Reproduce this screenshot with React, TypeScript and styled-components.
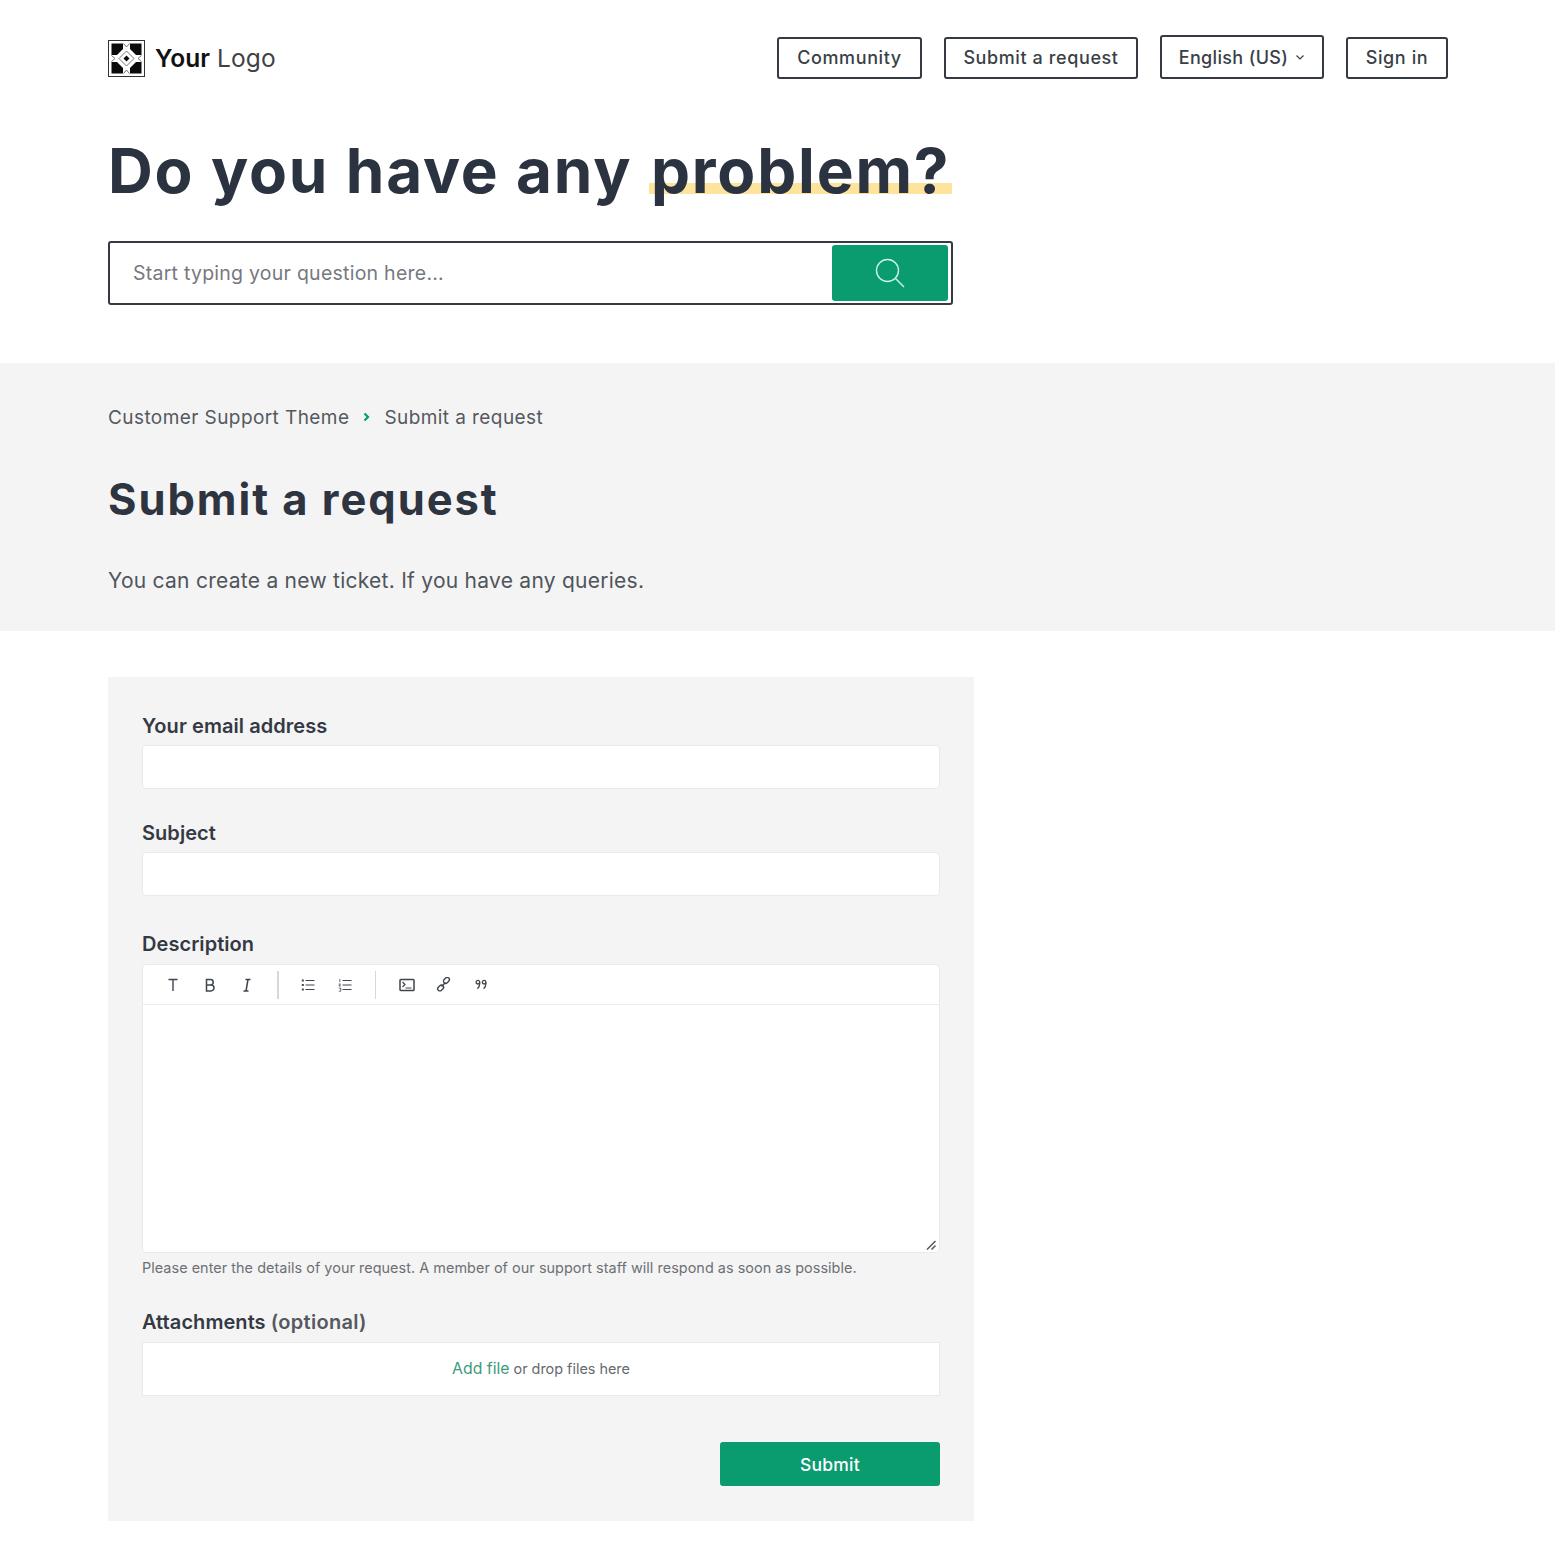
import React from "react";
import styled, { createGlobalStyle } from "styled-components";

const Global = createGlobalStyle`
  html, body { margin: 0; padding: 0; background: #fff; }
  body { font-family: Inter, "Open Sans", "Liberation Sans", sans-serif; color: #2c3340; }
  * { box-sizing: border-box; }
`;
const Page = styled.div`width: 1555px; height: 1553px; overflow: hidden; background: #fff;`;
const Wrap = styled.div`padding: 0 107px 0 108px;`;
const Header = styled.header`display: flex; justify-content: space-between; align-items: flex-end; height: 79px;`;
const Brand = styled.div`display: flex; align-items: center; gap: 10px; padding-bottom: 2px; font-size: 24.5px; letter-spacing: .1px; color: #3f4145;
  b { font-weight: 600; color: #111; }
  span { margin-top: -2px; }`;
const Nav = styled.nav`display: flex; align-items: flex-end; gap: 22px;`;
const NavButton = styled.a<{ $w: number; $tall?: boolean }>`
  display: flex; align-items: center; justify-content: center; gap: 7px; width: ${p => p.$w}px; height: ${p => (p.$tall ? 44 : 42)}px;
  padding-bottom: ${p => (p.$tall ? 0 : 2)}px;
  border: 2px solid #353a42; border-radius: 3px; font-size: 18px; font-weight: 500; letter-spacing: ${p => (p.$tall ? 0.35 : 0.6)}px; color: #3a3f47; background: #fff;`;
const Hero = styled.h2`margin: 54px 0 0; width: 845px; height: 76px; font-size: 62px; line-height: 76px; font-weight: 700; letter-spacing: 1.82px; color: #2c3340; white-space: nowrap;`;
const Mark = styled.span`padding: 0 2px; background: linear-gradient(transparent 66%, #fde39b 66%, #fde39b 81%, transparent 81%);`;
const Search = styled.div`display: flex; justify-content: space-between; align-items: center; width: 845px; height: 64px; margin-top: 32px; padding: 0 3px 0 23px; border: 2px solid #353a42; border-radius: 3px;`;
const Placeholder = styled.span`font-size: 19.5px; color: #75797f; letter-spacing: .25px;`;
const SearchBtn = styled.div`display: flex; align-items: center; justify-content: center; width: 116px; height: 56px; background: #0a9b6f; border-radius: 3px;`;
const Band = styled.section`height: 268px; margin-top: 58px; background: #f4f4f4; padding: 40px 108px 0;`;
const Crumbs = styled.div`display: flex; align-items: center; gap: 14px; height: 28px; font-size: 19px; letter-spacing: .42px; color: #55595f;`;
const Title = styled.h1`margin: 38px 0 0; height: 60px; font-size: 43.5px; line-height: 60px; font-weight: 700; letter-spacing: 1.95px; color: #2e3440;`;
const Lead = styled.p`margin: 37px 0 0; font-size: 21px; line-height: 30px; letter-spacing: .26px; color: #50545b;`;
const Card = styled.form`display: block; width: 866px; height: 844px; margin: 46px 0 0 108px; padding: 34px; background: #f4f4f4;`;
const Label = styled.div<{ $top?: number }>`margin-top: ${p => p.$top ?? 0}px; height: 30px; font-size: 20px; line-height: 30px; font-weight: 600; letter-spacing: .06px; color: #343944;
  span { font-weight: 600; letter-spacing: .3px; color: #55595f; }`;
const Input = styled.div`height: 44px; margin-top: 4px; background: #fff; border: 1px solid #e9e9e9; border-radius: 4px;`;
const Editor = styled.div`position: relative; height: 289px; margin-top: 5px; background: #fff; border: 1px solid #e9e9e9; border-radius: 4px;`;
const Toolbar = styled.div`display: flex; align-items: center; height: 40px; padding-left: 11px; border-bottom: 1px solid #ececec; color: #3f454d;`;
const Tool = styled.span`display: flex; align-items: center; justify-content: center; width: 37px; height: 30px;`;
const Sep = styled.i<{ $wide?: boolean }>`display: block; width: ${p => (p.$wide ? 2 : 1)}px; height: 28px; margin: 0 ${p => (p.$wide ? 10 : 12)}px 0 12px; background: #d8d8d8;`;
const Grip = styled.svg`position: absolute; right: 2px; bottom: 1px;`;
const Hint = styled.div`margin-top: 4px; font-size: 14.4px; line-height: 22px; letter-spacing: .05px; color: #6d7075;`;
const Drop = styled.div`display: flex; align-items: center; justify-content: center; gap: 4px; height: 54px; margin-top: 5px; padding-bottom: 2px; background: #fff; border: 1px solid #e9e9e9; font-size: 14.4px; color: #666a70;`;
const AddFile = styled.a`font-size: 15.8px; color: #3f9a7c;`;
const Actions = styled.div`display: flex; justify-content: flex-end; margin-top: 46px;`;
const Submit = styled.button`width: 220px; height: 44px; border: 0; border-radius: 3px; background: #0a9b6f; color: #fff; font: 500 17.5px Inter, sans-serif; letter-spacing: .2px;`;

const corner = "M3.500 3.500H15V9L9 15H3.500Z";
const Logo = () => (
  <svg width="37" height="37" viewBox="0 0 37 37">
    <rect x="0.5" y="0.5" width="36" height="36" fill="#fff" stroke="#333" />
    <path fill="#0b0b0b" d={corner} />
    <path fill="#0b0b0b" d={corner} transform="matrix(-1 0 0 1 37 0)" />
    <path fill="#0b0b0b" d={corner} transform="matrix(1 0 0 -1 0 37)" />
    <path fill="#0b0b0b" d={corner} transform="matrix(-1 0 0 -1 37 37)" />
    <path fill="none" stroke="#777" strokeWidth="1" d="M11 18.500 18.500 11 26 18.500 18.500 26Z" />
    <path fill="#0b0b0b" d="M18.500 15.500 21.500 18.500 18.500 21.500 15.500 18.500Z" />
    <path fill="none" stroke="#777" strokeWidth="1" d="M15.500 3.500 18.500 7 21.500 3.500M15.500 33.500 18.500 30 21.500 33.500M3.500 15.500 7 18.500 3.500 21.500M33.500 15.500 30 18.500 33.500 21.500" />
  </svg>
);

export default function App() {
  return (
    <Page>
      <Global />
      <Wrap>
        <Header>
          <Brand><Logo /><span><b>Your</b> Logo</span></Brand>
          <Nav>
            <NavButton $w={145}>Community</NavButton>
            <NavButton $w={194}>Submit a request</NavButton>
            <NavButton $w={164} $tall>English (US)
              <svg width="10" height="10" viewBox="0 0 10 10"><path d="M1.500 3.500 5 7l3.500-3.500" fill="none" stroke="#3a3f47" strokeWidth="1.200" /></svg>
            </NavButton>
            <NavButton $w={102}>Sign in</NavButton>
          </Nav>
        </Header>
        <Hero>Do you have any <Mark>problem?</Mark></Hero>
        <Search>
          <Placeholder>Start typing your question here...</Placeholder>
          <SearchBtn>
            <svg width="32" height="32" viewBox="0 0 32 32" fill="none" stroke="#c9f4e4" strokeWidth="1.400">
              <circle cx="13.500" cy="13.500" r="11" /><path d="M21.500 21.500 30 30" />
            </svg>
          </SearchBtn>
        </Search>
      </Wrap>
      <Band>
        <Crumbs>
          <span>Customer Support Theme</span>
          <svg width="7" height="10" viewBox="0 0 7 10"><path d="M1.500 1.500 5 5 1.500 8.500" fill="none" stroke="#0a9b6f" strokeWidth="2.200" /></svg>
          <span>Submit a request</span>
        </Crumbs>
        <Title>Submit a request</Title>
        <Lead>You can create a new ticket. If you have any queries.</Lead>
      </Band>
      <Card>
        <Label>Your email address</Label>
        <Input />
        <Label $top={29}>Subject</Label>
        <Input />
        <Label $top={33}>Description</Label>
        <Editor>
          <Toolbar>
            <Tool><svg width="14" height="14" viewBox="0 0 14 14" fill="none" stroke="currentColor" strokeWidth="1.400"><path d="M2.500 1.500h9M7 1.500v11.500" /></svg></Tool>
            <Tool><svg width="14" height="14" viewBox="0 0 14 14" fill="none" stroke="currentColor" strokeWidth="1.500"><path d="M3.500 1.500h4a2.700 2.700 0 0 1 0 5.400h-4zM3.500 6.900h4.500a3 3 0 0 1 0 6H3.500z" /></svg></Tool>
            <Tool><svg width="14" height="14" viewBox="0 0 14 14" fill="none" stroke="currentColor" strokeWidth="1.500"><path d="M5.500 1.500h5M3.500 13h5M8 1.500 6 13" /></svg></Tool>
            <Sep $wide />
            <Tool><svg width="14" height="14" viewBox="0 0 14 14" fill="none" stroke="currentColor"><path d="M4.500 2.500H13.500M4.500 7H13.500M4.500 11.500H13.500" strokeWidth="1.200" /><path d="M.8 2.500h2M.8 7h2M.8 11.500h2" strokeWidth="2" /></svg></Tool>
            <Tool><svg width="14" height="14" viewBox="0 0 14 14" fill="none" stroke="currentColor"><path d="M4.500 2.500H13.500M4.500 7H13.500M4.500 11.500H13.500" strokeWidth="1.200" /><path d="M1.800 1v3M.8 6h1.700L.8 8h2M.8 10.200h2v3H.8" strokeWidth=".8" /></svg></Tool>
            <Sep />
            <Tool><svg width="16" height="14" viewBox="0 0 16 14" fill="none" stroke="currentColor"><rect x="1" y="1.500" width="14" height="11" rx=".8" strokeWidth="1.500" /><path d="M3.500 4 6 6.500 3.500 9M6.500 10h6" strokeWidth="1.200" /></svg></Tool>
            <Tool><svg width="15" height="15" viewBox="0 0 15 15" fill="none" stroke="currentColor" strokeWidth="1.400"><rect x="7.200" y="1.200" width="6.500" height="4.400" rx="2.200" transform="rotate(-45 10.400 3.400)" /><rect x="1.400" y="8.800" width="6.500" height="4.400" rx="2.200" transform="rotate(-45 4.600 11)" /><path d="M5.500 9.500 9.500 5.500" /></svg></Tool>
            <Tool><svg width="12" height="11" viewBox="0 0 12 11" fill="none" stroke="currentColor" strokeWidth="1.300"><circle cx="2.900" cy="3.200" r="1.800" /><circle cx="9.100" cy="3.200" r="1.800" /><path d="M4.700 3.200v1.600C4.700 7 3.800 8.600 2.400 9.800M10.900 3.200v1.600C10.900 7 10 8.600 8.600 9.800" /></svg></Tool>
          </Toolbar>
          <Grip width="11" height="11" viewBox="0 0 11 11" fill="none" stroke="#555" strokeWidth="1.500"><path d="M1 9.500 9.500 1M5.500 9.500 9.500 5.500" /></Grip>
        </Editor>
        <Hint>Please enter the details of your request. A member of our support staff will respond as soon as possible.</Hint>
        <Label $top={28}>Attachments <span>(optional)</span></Label>
        <Drop><AddFile>Add file</AddFile> or drop files here</Drop>
        <Actions><Submit type="button">Submit</Submit></Actions>
      </Card>
    </Page>
  );
}
